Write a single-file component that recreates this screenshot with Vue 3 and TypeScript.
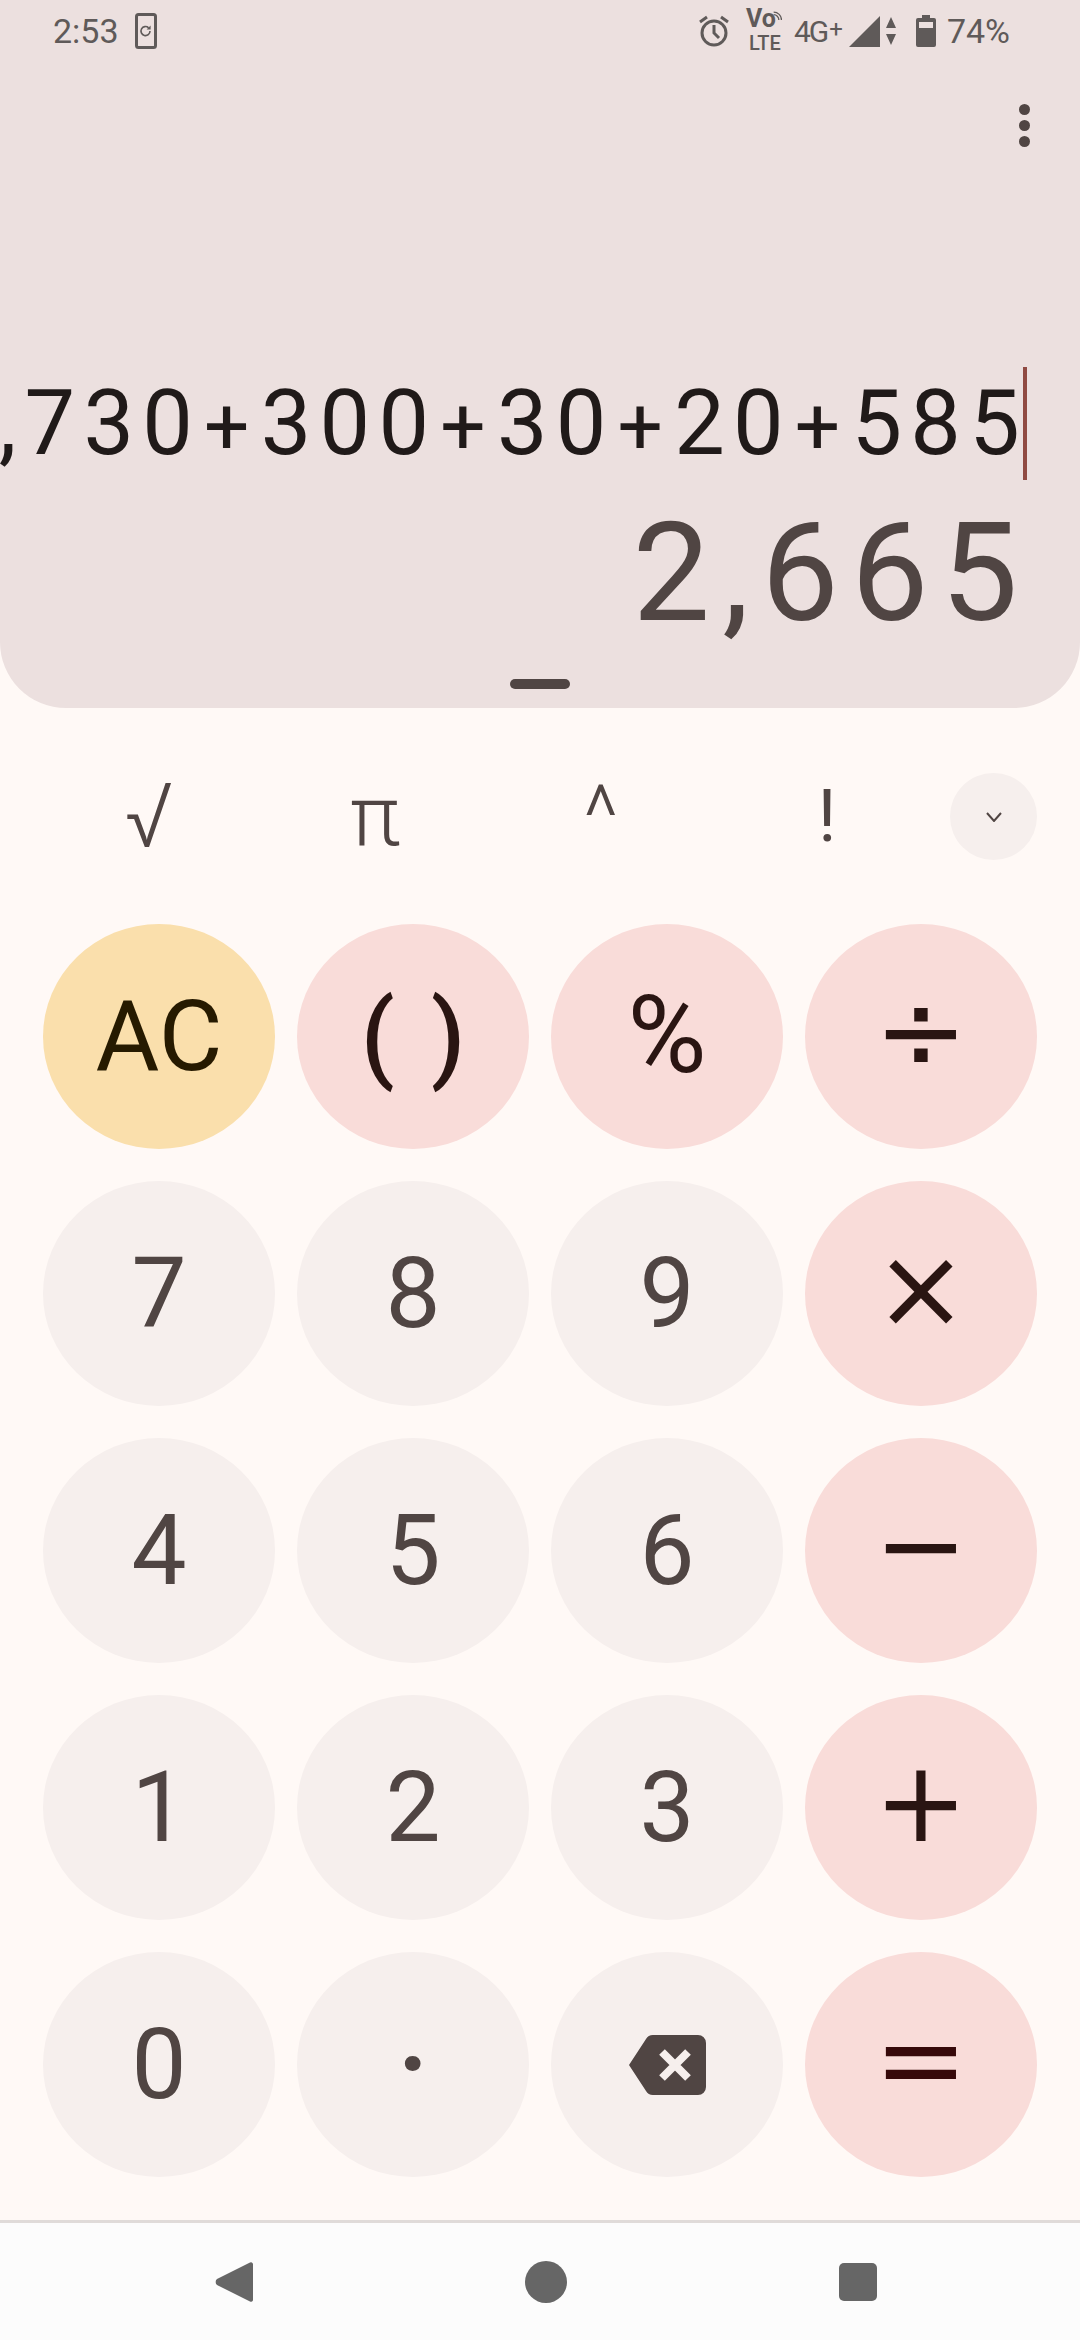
<template>
  <div class="phone">
    <section class="display">
      <header class="status">
        <span class="time">2:53</span>
        <svg class="rotate" viewBox="0 0 22 36" width="22" height="36">
          <rect x="1.5" y="1.5" width="19" height="33" rx="2" fill="none" stroke="#5f5a59" stroke-width="3" />
          <path d="M15 18a4.5 4.5 0 1 1-1.4-3.2" fill="none" stroke="#5f5a59" stroke-width="1.6" />
          <path d="M15.6 12.6v4h-4z" fill="#5f5a59" />
        </svg>
        <span class="status-gap"></span>
        <svg class="alarm" viewBox="0 0 32 34" width="32" height="34">
          <circle cx="16" cy="19" r="12" fill="none" stroke="#5f5a59" stroke-width="3" />
          <path d="M16 11v8l5 5" fill="none" stroke="#5f5a59" stroke-width="3" />
          <path d="M2 8l7-5M30 8l-7-5" fill="none" stroke="#5f5a59" stroke-width="3" />
        </svg>
        <div class="volte">
          <div class="vo">
            <span>Vo</span>
            <svg viewBox="0 0 14 14" width="14" height="14">
              <path d="M1 5a8 8 0 0 1 8 8M1 1a12 12 0 0 1 12 12" fill="none" stroke="#5f5a59" stroke-width="2" />
            </svg>
          </div>
          <span class="lte">LTE</span>
        </div>
        <span class="net">4G<span class="net-plus">+</span></span>
        <svg class="signal" viewBox="0 0 31 31" width="31" height="31">
          <path d="M31 0v31H0z" fill="#5f5a59" />
        </svg>
        <svg class="arrows" viewBox="0 0 10 28" width="10" height="28">
          <path d="M5 0l5 11H0zM5 28L0 17h10z" fill="#5f5a59" />
        </svg>
        <svg class="battery" viewBox="0 0 20 32" width="20" height="32">
          <path d="M6 0h8v3h4a2 2 0 0 1 2 2v25a2 2 0 0 1-2 2H2a2 2 0 0 1-2-2V5a2 2 0 0 1 2-2h4z" fill="#5f5a59" />
          <rect x="3" y="7" width="14" height="6" fill="#ece0df" />
        </svg>
        <span class="percent">74%</span>
      </header>

      <div class="menu">
        <i></i><i></i><i></i>
      </div>

      <div class="formula">
        <span v-for="(part, i) in formula" :key="i" :class="{ plus: part === '+' }">{{ part }}</span>
        <b class="cursor"></b>
      </div>
      <div class="result">2,665</div>
      <div class="handle"></div>
    </section>

    <main class="pad">
      <div class="extras">
        <span v-for="item in extras" :key="item.sym" class="extra" :class="item.cls">{{ item.sym }}</span>
        <div class="collapse">
          <svg viewBox="0 0 16 10" width="16" height="10">
            <path d="M1 1l7 8 7-8" fill="none" stroke="#504543" stroke-width="2" />
          </svg>
        </div>
      </div>

      <div class="keys">
        <button v-for="key in keys" :key="key.label" class="key" :class="[key.kind, key.cls]" :aria-label="key.label">
          <svg v-if="key.label === 'del'" viewBox="0 0 77 60" width="77" height="60">
            <path d="M24 0h45a8 8 0 0 1 8 8v44a8 8 0 0 1-8 8H24a8 8 0 0 1-7-4L0 30 17 4a8 8 0 0 1 7-4z" fill="#504543" />
            <path d="M33 17l26 26M59 17L33 43" fill="none" stroke="#f6efed" stroke-width="8" />
          </svg>
          <template v-else>{{ key.label }}</template>
        </button>
      </div>
    </main>

    <nav class="navbar">
      <div class="nav-cell">
        <svg viewBox="0 0 38 42" width="38" height="42">
          <path d="M35 1.5a2 2 0 0 1 3 1.5v36a2 2 0 0 1-3 1.5L2 24a4 4 0 0 1 0-6z" fill="#666" />
        </svg>
      </div>
      <div class="nav-cell">
        <svg viewBox="0 0 42 42" width="42" height="42"><circle cx="21" cy="21" r="21" fill="#666" /></svg>
      </div>
      <div class="nav-cell">
        <svg viewBox="0 0 38 38" width="38" height="38"><rect width="38" height="38" rx="5" fill="#666" /></svg>
      </div>
    </nav>
  </div>
</template>

<script setup lang="ts">
type Key = { label: string; kind: 'num' | 'op' | 'clear'; cls?: string }

const formula = ',730+300+30+20+585'.split(/(\+)/)

const extras = [
  { sym: '√', cls: 'sqrt' },
  { sym: 'π', cls: '' },
  { sym: '^', cls: '' },
  { sym: '!', cls: 'bang' }
]

const keys: Key[] = [
  { label: 'AC', kind: 'clear' },
  { label: '( )', kind: 'op', cls: 'parens' },
  { label: '%', kind: 'op', cls: 'pct' },
  { label: '÷', kind: 'op', cls: 'sym' },
  { label: '7', kind: 'num' },
  { label: '8', kind: 'num' },
  { label: '9', kind: 'num' },
  { label: '×', kind: 'op', cls: 'sym' },
  { label: '4', kind: 'num' },
  { label: '5', kind: 'num' },
  { label: '6', kind: 'num' },
  { label: '−', kind: 'op', cls: 'sym' },
  { label: '1', kind: 'num' },
  { label: '2', kind: 'num' },
  { label: '3', kind: 'num' },
  { label: '+', kind: 'op', cls: 'sym' },
  { label: '0', kind: 'num' },
  { label: '·', kind: 'num', cls: 'dot' },
  { label: 'del', kind: 'num' },
  { label: '=', kind: 'op', cls: 'sym equals' }
]
</script>

<style>
html,
body {
  margin: 0;
  background: #fff9f6;
}
</style>

<style scoped>
.phone {
  width: 1080px;
  height: 2340px;
  display: flex;
  flex-direction: column;
  background: #fff9f6;
  font-family: Roboto, "Liberation Sans", sans-serif;
  overflow: hidden;
}

.display {
  height: 708px;
  flex: none;
  display: flex;
  flex-direction: column;
  background: #ece0df;
  border-radius: 0 0 66px 66px;
  overflow: hidden;
}

.status {
  height: 58px;
  padding: 2px 70px 0 53px;
  display: flex;
  align-items: center;
  color: #5f5a59;
  font-size: 34px;
}

.time {
  line-height: 58px;
}

.rotate {
  margin-left: 16px;
}

.status-gap {
  flex: 1;
}

.alarm {
  margin-right: 16px;
}

.volte {
  width: 36px;
  margin-right: 12px;
  display: flex;
  flex-direction: column;
  font-size: 20px;
  font-weight: 700;
  line-height: 20px;
}

.vo {
  display: flex;
  align-items: flex-start;
  font-size: 25px;
  height: 24px;
}

.vo svg {
  margin-left: -3px;
}

.lte {
  font-weight: 500;
  padding-left: 3px;
}

.net {
  width: 50px;
  margin-right: 5px;
  font-size: 30px;
  letter-spacing: -2px;
}

.net-plus {
  margin-left: 2px;
  font-size: 24px;
  letter-spacing: 0;
  vertical-align: 5px;
}

.arrows {
  margin-left: 6px;
}

.battery {
  margin-left: 20px;
}

.percent {
  margin-left: 11px;
}

.menu {
  height: 50px;
  margin-top: 44px;
  padding-right: 50px;
  display: flex;
  flex-direction: column;
  align-items: flex-end;
  gap: 5px;
}

.menu i {
  width: 11px;
  height: 11px;
  border-radius: 50%;
  background: #504543;
}

.formula {
  margin-top: 213px;
  height: 113px;
  padding-right: 52px;
  display: flex;
  justify-content: flex-end;
  align-items: baseline;
  line-height: 113px;
  color: #201a19;
  font-size: 90px;
  letter-spacing: 8.25px;
  white-space: nowrap;
  position: relative;
}

.plus {
  margin: 0 3px;
  font-size: 80px;
}

.cursor {
  position: absolute;
  right: 53px;
  top: 0;
  width: 4px;
  height: 113px;
  background: #904a42;
}

.result {
  margin-top: 13px;
  padding-right: 50px;
  text-align: right;
  color: #504543;
  font-size: 138px;
  line-height: 160px;
  letter-spacing: 12px;
}

.handle {
  width: 60px;
  height: 10px;
  margin: 26px auto 0;
  border-radius: 5px;
  background: #504543;
}

.pad {
  flex: 1;
  padding: 65px 43px 0;
}

.extras {
  height: 87px;
  margin-left: -7px;
  display: grid;
  grid-template-columns: repeat(4, 226px) 1fr;
  align-items: center;
}

.extra {
  text-align: center;
  color: #504543;
  font-size: 85px;
  font-weight: 300;
  line-height: 87px;
}

.sqrt {
  font-size: 90px;
}

.bang {
  font-size: 72px;
  font-weight: 400;
}

.collapse {
  width: 87px;
  height: 87px;
  justify-self: end;
  display: flex;
  align-items: center;
  justify-content: center;
  border-radius: 50%;
  background: #f6efed;
}

.keys {
  margin-top: 64px;
  display: grid;
  grid-template-columns: repeat(4, 232px);
  grid-auto-rows: 225px;
  gap: 32px 22px;
}

.key {
  border: 0;
  padding: 0;
  display: flex;
  align-items: center;
  justify-content: center;
  border-radius: 50%;
  font-family: inherit;
  font-size: 98px;
  line-height: 1;
}

.num {
  background: #f6efed;
  color: #504543;
}

.op {
  background: #f9dcd9;
  color: #2a1512;
}

.clear {
  background: #fadfac;
  color: #261a00;
}

.parens {
  word-spacing: 12px;
  font-weight: 500;
}

.pct {
  padding-bottom: 4px;
  font-size: 108px;
}

.dot {
  font-size: 140px;
}

.sym {
  padding-bottom: 12px;
  font-family: "DejaVu Sans", sans-serif;
  font-size: 112px;
}

.equals {
  color: #37090a;
}

.navbar {
  height: 117px;
  flex: none;
  padding-left: 78px;
  display: grid;
  grid-template-columns: repeat(3, 312px);
  align-items: center;
  border-top: 3px solid #e0dbd9;
  background: #fcfcfc;
}

.nav-cell {
  display: flex;
  justify-content: center;
  align-items: center;
}
</style>
